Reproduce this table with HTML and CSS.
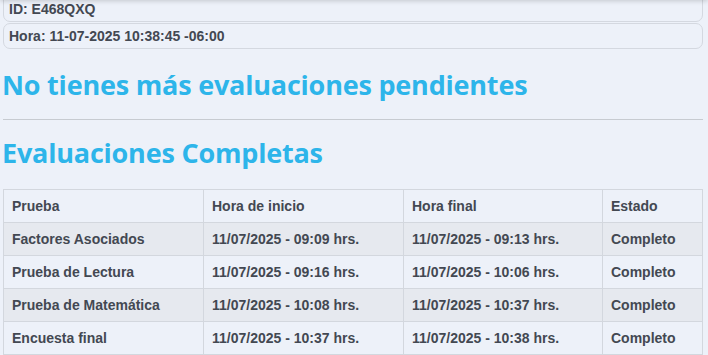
FILE: index.html
```html
<!DOCTYPE html>
<html lang="es">
<head>
<meta charset="utf-8">
<title>Evaluaciones</title>
<link rel="stylesheet" href="styles.css">
</head>
<body>
<div class="topshade"></div>
<main class="page">
  <div class="info info-first">ID: E468QXQ</div>
  <div class="info info-second">Hora: 11-07-2025 10:38:45 -06:00</div>
  <h1 class="title">No tienes más evaluaciones pendientes</h1>
  <hr class="sep">
  <h2 class="title title-2">Evaluaciones Completas</h2>
  <table class="grid">
    <colgroup>
      <col class="c1"><col class="c2"><col class="c3"><col class="c4">
    </colgroup>
    <thead>
      <tr><th>Prueba</th><th>Hora de inicio</th><th>Hora final</th><th>Estado</th></tr>
    </thead>
    <tbody>
      <tr><td>Factores Asociados</td><td>11/07/2025 - 09:09 hrs.</td><td>11/07/2025 - 09:13 hrs.</td><td>Completo</td></tr>
      <tr><td>Prueba de Lectura</td><td>11/07/2025 - 09:16 hrs.</td><td>11/07/2025 - 10:06 hrs.</td><td>Completo</td></tr>
      <tr><td>Prueba de Matemática</td><td>11/07/2025 - 10:08 hrs.</td><td>11/07/2025 - 10:37 hrs.</td><td>Completo</td></tr>
      <tr><td>Encuesta final</td><td>11/07/2025 - 10:37 hrs.</td><td>11/07/2025 - 10:38 hrs.</td><td>Completo</td></tr>
    </tbody>
  </table>
</main>
</body>
</html>
```
FILE: styles.css
```css
html, body {
  margin: 0;
  padding: 0;
  background: #edf1f9;
  overflow: hidden;
}
body {
  font-family: "Liberation Sans", Arial, sans-serif;
  color: #434852;
}
.topshade {
  position: fixed;
  top: -10px;
  left: 0;
  right: 0;
  height: 10px;
  box-shadow: 0 1px 5px rgba(0, 0, 0, 0.18);
}
.page {
  padding: 0 5px 0 3px;
}
.info {
  height: 24px;
  border: 1px solid #d4d8e0;
  border-radius: 7px;
  padding: 0 5px;
  font-size: 14px;
  font-weight: bold;
  line-height: 24px;
}
.info-first {
  padding-top: 10px;
  margin-top: -14px;
}
.info-second {
  margin-top: 1px;
}
.title {
  margin: 20px 0 0 -1px;
  font-family: "Open Sans", sans-serif;
  font-weight: 700;
  font-size: 27px;
  line-height: 32px;
  color: #2db5ea;
  letter-spacing: -0.2px;
}
.sep {
  margin: 18px 0 0 0;
  border: 0;
  border-top: 1px solid #c7cbd1;
  height: 0;
}
.title-2 {
  margin-top: 17px;
}
.grid {
  margin-top: 20px;
  width: 100%;
  border-collapse: collapse;
  font-size: 14px;
  font-weight: bold;
  table-layout: fixed;
}
.c1 { width: 200px; }
.c2 { width: 200px; }
.c3 { width: 199px; }
.grid th, .grid td {
  border: 1px solid #d3d7de;
  height: 32px;
  padding: 0 8px;
  text-align: left;
  vertical-align: middle;
  white-space: nowrap;
}
.grid th {
  font-weight: bold;
}
.grid tbody tr:nth-child(odd) {
  background: #e6e9ef;
}
```
